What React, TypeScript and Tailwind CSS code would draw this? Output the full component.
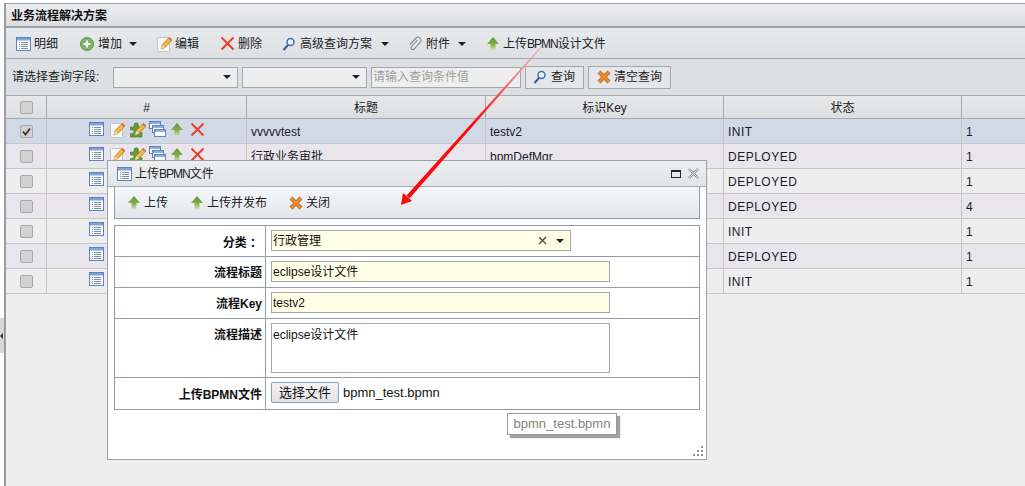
const font = "font-['Liberation_Sans','Noto_Sans_CJK_SC',sans-serif]";

function DetailIcon() {
  return (
    <svg width="15" height="14" viewBox="0 0 15 14" className="shrink-0">
      <rect x="0.5" y="0.5" width="14" height="13" fill="#fff" stroke="#5b84bd" />
      <rect x="1" y="1" width="13" height="2.5" fill="#7fa3d6" />
      <path d="M3 5.500h1M5 5.500h7M3 7.500h1M5 7.500h7M3 9.500h1M5 9.500h7M3 11.500h1M5 11.500h7" stroke="#7f8fa8" />
    </svg>
  );
}

function Pencil({ x = 0 }: { x?: number }) {
  return (
    <g transform={`translate(${x} 0)`}>
      <path d="M4 13l1-4 7-7.500 3 2.500-7 7.500z" fill="#f0b840" stroke="#b8741e" strokeWidth="0.7" />
      <path d="M4 13l1-4 3 2.500z" fill="#f5dcb0" />
      <path d="M11 2.500l3 2.500 1-1.500-2.500-2.500z" fill="#d9704a" />
    </g>
  );
}

function EditIcon() {
  return (
    <svg width="16" height="16" viewBox="0 0 16 16" className="shrink-0">
      <rect x="0.5" y="1.500" width="12" height="14" rx="1" fill="#f6f6f4" stroke="#c4c4c4" />
      <Pencil />
    </svg>
  );
}

function PuzzleIcon() {
  return (
    <svg width="16" height="16" viewBox="0 0 16 16" className="shrink-0">
      <path d="M0.500 5h3.500V3a2.200 2.200 0 0 1 4.400 0v2H12v3.500h-1.500v2H12V15H0.500v-3.500h1.800a1.800 1.800 0 0 0 0-3.600H0.500z" fill="#5f9e3a" stroke="#3f7a28" strokeWidth="0.6" />
      <Pencil x={1} />
    </svg>
  );
}

function StackIcon() {
  return (
    <svg width="17" height="16" viewBox="0 0 17 16" className="shrink-0">
      <rect x="0.5" y="0.5" width="11" height="7" fill="#fff" stroke="#5b84bd" />
      <rect x="1" y="1" width="10" height="2" fill="#8fb0dc" />
      <rect x="3.500" y="4.500" width="11" height="7" fill="#fff" stroke="#5b84bd" />
      <rect x="4" y="5" width="10" height="2" fill="#8fb0dc" />
      <rect x="5.500" y="8.500" width="11" height="7" fill="#fff" stroke="#5b84bd" />
      <rect x="6" y="9" width="10" height="2" fill="#8fb0dc" />
    </svg>
  );
}

function UpIcon() {
  return (
    <svg width="14" height="16" viewBox="0 0 14 16" className="shrink-0">
      <defs>
        <linearGradient id="upg" x1="0" y1="0" x2="0" y2="1">
          <stop offset="0" stopColor="#5f9430" />
          <stop offset="0.55" stopColor="#86b04c" />
          <stop offset="1" stopColor="#dfeccb" />
        </linearGradient>
      </defs>
      <path d="M7 1l6 7H9.500v7h-5V8H1z" fill="url(#upg)" />
    </svg>
  );
}

function RedX() {
  return (
    <svg width="15" height="15" viewBox="0 0 15 15" className="shrink-0">
      <path d="M1.500 1.500l12 12M13.500 1.500l-12 12" stroke="#e8432a" strokeWidth="2" />
    </svg>
  );
}

function OrangeX() {
  return (
    <svg width="14" height="14" viewBox="0 0 14 14" className="shrink-0">
      <path d="M2 2l10 10M12 2L2 12" stroke="#9a6a3a" strokeWidth="4" />
      <path d="M2 2l10 10M12 2L2 12" stroke="#ef8a2a" strokeWidth="2.600" />
    </svg>
  );
}

function PlusIcon() {
  return (
    <svg width="14" height="14" viewBox="0 0 14 14" className="shrink-0">
      <circle cx="7" cy="7" r="6.500" fill="#79b765" stroke="#5b9a4c" />
      <path d="M7 3.500v7M3.500 7h7" stroke="#fff" strokeWidth="2.200" />
    </svg>
  );
}

function SearchIcon() {
  return (
    <svg width="14" height="14" viewBox="0 0 14 14" className="shrink-0">
      <circle cx="8.500" cy="5" r="3.500" fill="#eef4fb" stroke="#3f74b5" strokeWidth="1.500" />
      <path d="M6 8l-4.500 5" stroke="#2f5f9f" strokeWidth="2" />
    </svg>
  );
}

function ClipIcon() {
  return (
    <svg width="14" height="15" viewBox="0 0 14 15" className="shrink-0">
      <path d="M9 3.500L3 10a1.800 1.800 0 0 0 2.600 2.500l6.400-7a3 3 0 0 0-4.400-4L1.500 8" transform="translate(0.500 0.500)" fill="none" stroke="#8a8a8a" strokeWidth="1.100" />
    </svg>
  );
}

function Caret({ className = "" }: { className?: string }) {
  return <span className={`w-0 h-0 border-x-[4px] border-x-transparent border-t-[4px] border-t-[#222] ${className}`} />;
}

function ToolBtn({ icon, label, caretClass, className = "" }: { icon: React.ReactNode; label: React.ReactNode; caretClass?: string; className?: string }) {
  return (
    <div className={`flex items-center ${className}`}>
      {icon}
      <span className="text-[12px] text-[#222] whitespace-nowrap">{label}</span>
      {caretClass && <Caret className={caretClass} />}
    </div>
  );
}

// 窄一点的 BPMN，原图的西文比 Liberation 窄
function Bpmn() {
  return <span className="tracking-[-1px]">BPMN</span>;
}

const rows = [
  { title: "vvvvvtest", key: "testv2", status: "INIT", ver: "1", bg: "bg-[#d2d9e6]" },
  { title: "行政业务审批", key: "bpmDefMgr", status: "DEPLOYED", ver: "1", bg: "bg-[#e8e6ec]" },
  { title: "", key: "", status: "DEPLOYED", ver: "1", bg: "bg-[#eeeeee]" },
  { title: "", key: "", status: "DEPLOYED", ver: "4", bg: "bg-[#e8e6ec]" },
  { title: "", key: "", status: "INIT", ver: "1", bg: "bg-[#eeeeee]" },
  { title: "", key: "", status: "DEPLOYED", ver: "1", bg: "bg-[#e8e6ec]" },
  { title: "", key: "", status: "INIT", ver: "1", bg: "bg-[#eeeeee]" },
];

const gridCols = "grid grid-cols-[41px_200px_239px_238px_238px_1fr]";

function Checkbox({ checked }: { checked?: boolean }) {
  return (
    <span className="w-[13px] h-[13px] rounded-[2px] bg-[#d2d2d2] border border-[#a8a8a8] flex items-center justify-center">
      {checked && (
        <svg width="9" height="9" viewBox="0 0 9 9">
          <path d="M1 4.500l2.500 3L8 1.500" fill="none" stroke="#333" strokeWidth="1.800" />
        </svg>
      )}
    </span>
  );
}

function FormRow({ label, className, labelClass, children }: { label: string; className: string; labelClass: string; children: React.ReactNode }) {
  return (
    <div className={`flex border-b border-[#939ca8] last:border-b-0 ${className}`}>
      <div className={`w-[151px] shrink-0 border-r border-[#939ca8] text-right pr-[3px] text-[12px] font-bold text-[#111] whitespace-pre ${labelClass}`}>{label}</div>
      <div className="flex-1 pl-[4px] pt-[4px]">{children}</div>
    </div>
  );
}

export default function App() {
  return (
    <div className={`relative w-[1025px] h-[486px] overflow-hidden bg-white flex ${font}`}>
      <div className="relative w-[4px] shrink-0 bg-white">
        <div className="absolute left-0 top-[318px] w-[4px] h-[35px] bg-[#d6d6d6] flex items-center">
          <span className="w-0 h-0 border-y-[3px] border-y-transparent border-r-[3px] border-r-[#333]" />
        </div>
      </div>
      <div className="flex-1 min-w-0 border-l-2 border-[#9c9c9c] bg-[#eeeeee] mt-[3px] border-t border-t-[#9c9c9c]">
        <div className="h-[24px] flex items-center pl-[5px] pt-[2px] bg-gradient-to-b from-[#eceef0] to-[#dcdee2] border-b-2 border-[#9ea1a5] text-[12px] font-bold text-[#111]">
          业务流程解决方案
        </div>
        <div className="h-[31px] flex items-center pl-[10px] pt-[1px] bg-gradient-to-b from-[#e8eaed] to-[#dcdfe3] border-b border-[#a6abb1]">
          <ToolBtn icon={<DetailIcon />} label="明细" className="gap-[3px]" />
          <ToolBtn icon={<PlusIcon />} label="增加" caretClass="ml-[3px]" className="gap-[4px] ml-[22px]" />
          <ToolBtn icon={<EditIcon />} label="编辑" className="gap-[2px] ml-[20px]" />
          <ToolBtn icon={<RedX />} label="删除" className="gap-[3px] ml-[21px]" />
          <ToolBtn icon={<SearchIcon />} label="高级查询方案" caretClass="ml-[5px]" className="gap-[4px] ml-[20px]" />
          <ToolBtn icon={<ClipIcon />} label="附件" caretClass="ml-[4px]" className="gap-[4px] ml-[19px]" />
          <ToolBtn icon={<UpIcon />} label={<>上传<Bpmn />设计文件</>} className="gap-[3px] ml-[20px]" />
        </div>
        <div className="h-[37px] flex items-center pl-[6px] bg-[#dcdfe3] border-b border-[#a6abb1]">
          <span className="w-[101px] text-[12px] text-[#222] whitespace-nowrap">请选择查询字段:</span>
          <div className="w-[125px] h-[21px] bg-[#eeeeee] border border-[#a2a8ae] flex items-center justify-end pr-[6px]">
            <Caret />
          </div>
          <div className="w-[125px] h-[21px] ml-[4px] bg-[#eeeeee] border border-[#a2a8ae] flex items-center justify-end pr-[6px]">
            <Caret />
          </div>
          <div className="w-[150px] h-[21px] ml-[4px] bg-[#eeeeee] border border-[#a2a8ae] flex items-center pl-[1px] text-[12px] text-[#a0a0a0]">
            请输入查询条件值
          </div>
          <div className="w-[59px] h-[23px] ml-[4px] border border-[#a2a8ae] bg-[#e4e6e9] flex items-center pl-[7px] gap-[4px] text-[12px] text-[#222]">
            <SearchIcon />查询
          </div>
          <div className="w-[83px] h-[23px] ml-[4px] border border-[#a2a8ae] bg-[#e4e6e9] flex items-center pl-[8px] gap-[3px] text-[12px] text-[#222]">
            <OrangeX />清空查询
          </div>
        </div>
        <div className={`${gridCols} h-[23px] bg-gradient-to-b from-[#e6e8ea] to-[#dcdee1] border-b border-[#a6abb1] text-[12px] text-[#222]`}>
          <div className="border-r border-[#a6abb1] flex items-center justify-center"><Checkbox /></div>
          <div className="border-r border-[#a6abb1] flex items-center justify-center pt-[2px]">#</div>
          <div className="border-r border-[#a6abb1] flex items-center justify-center pt-[2px]">标题</div>
          <div className="border-r border-[#a6abb1] flex items-center justify-center pt-[2px]">标识Key</div>
          <div className="border-r border-[#a6abb1] flex items-center justify-center pt-[2px]">状态</div>
          <div />
        </div>
        {rows.map((r, i) => (
          <div key={i} className={`${gridCols} h-[25px] ${r.bg} border-b border-[#c6c6c6] text-[12px] text-[#1a1a2a]`}>
            <div className="border-r border-[#c6c6c6] flex items-center justify-center"><Checkbox checked={i === 0} /></div>
            <div className="border-r border-[#c6c6c6] flex items-start pt-[3px] pl-[42px]">
              <DetailIcon />
              {i < 2 && (
                <>
                  <span className="ml-[6px]"><EditIcon /></span>
                  <span className="ml-[4px]"><PuzzleIcon /></span>
                  <span className="ml-[3px] -mt-[1px]"><StackIcon /></span>
                  <span className="ml-[4px]"><UpIcon /></span>
                  <span className="ml-[6px]"><RedX /></span>
                </>
              )}
            </div>
            <div className="border-r border-[#c6c6c6] flex items-center pl-[4px] pt-[1px]">{r.title}</div>
            <div className="border-r border-[#c6c6c6] flex items-center pl-[4px] pt-[1px]">{r.key}</div>
            <div className="border-r border-[#c6c6c6] flex items-center pl-[4px] pt-[1px] tracking-[0.5px]">{r.status}</div>
            <div className="flex items-center pl-[4px] pt-[1px]">{r.ver}</div>
          </div>
        ))}
      </div>

      {/* 上传对话框 */}
      <div className="absolute left-[107px] top-[160px] w-[600px] h-[300px] bg-white border border-[#9c9fa3] flex flex-col">
        <div className="h-[26px] shrink-0 flex items-center pl-[9px] pr-[7px] gap-[3px] bg-gradient-to-b from-[#eceef0] to-[#e2e4e7] border-b border-[#a6a9ad] text-[12px] text-[#222]">
          <DetailIcon />
          <span>上传<Bpmn />文件</span>
          <span className="ml-auto w-[10px] h-[8px] border border-[#223] border-t-2" />
          <svg width="11" height="11" viewBox="0 0 11 11" className="ml-[4px]">
            <path d="M1 1l9 9M10 1l-9 9" stroke="#8a8d90" strokeWidth="2.400" />
            <path d="M1 1l9 9M10 1l-9 9" stroke="#fff" strokeWidth="0.800" />
          </svg>
        </div>
        <div className="ml-[6px] mr-[6px] h-[32px] shrink-0 flex items-center pl-[12px] pt-[1px] bg-gradient-to-b from-[#f5f7fa] to-[#e3e6eb] border border-t-0 border-[#939ca8]">
          <ToolBtn icon={<UpIcon />} label="上传" className="gap-[3px]" />
          <ToolBtn icon={<UpIcon />} label="上传并发布" className="gap-[3px] ml-[22px]" />
          <ToolBtn icon={<OrangeX />} label="关闭" className="gap-[3px] ml-[22px]" />
        </div>
        <div className="ml-[6px] mr-[6px] mt-[6px] h-[185px] border border-[#939ca8]">
          <FormRow label="分类 ：" className="h-[31px]" labelClass="pt-[8px]">
            <div className="ml-[1px] w-[300px] h-[21px] bg-[#ffffe6] border border-[#a2a8ae] flex items-center pl-[1px] pr-[5px] text-[12px] text-[#111]">
              行政管理
              <svg width="9" height="9" viewBox="0 0 9 9" className="ml-auto">
                <path d="M1 1l7 7M8 1l-7 7" stroke="#444" strokeWidth="1.200" />
              </svg>
              <Caret className="ml-[9px] mr-[1px]" />
            </div>
          </FormRow>
          <FormRow label="流程标题" className="h-[31px]" labelClass="pt-[7px]">
            <div className="ml-[1px] w-[339px] h-[21px] bg-[#ffffe6] border border-[#a2a8ae] flex items-center pl-[1px] text-[12px] text-[#111]">eclipse设计文件</div>
          </FormRow>
          <FormRow label="流程Key" className="h-[31px]" labelClass="pt-[7px]">
            <div className="ml-[1px] w-[339px] h-[21px] bg-[#ffffe6] border border-[#a2a8ae] flex items-center pl-[1px] text-[12px] text-[#111]">testv2</div>
          </FormRow>
          <FormRow label="流程描述" className="h-[59px]" labelClass="pt-[7px]">
            <div className="ml-[1px] w-[339px] h-[50px] bg-white border border-[#a2a8ae] pl-[1px] pt-[2px] text-[12px] text-[#111]">eclipse设计文件</div>
          </FormRow>
          <FormRow label="上传BPMN文件" className="h-[31px]" labelClass="pt-[8px]">
            <div className="ml-[1px] flex items-center gap-[4px] text-[13px] text-[#111]">
              <div className="w-[68px] h-[21px] rounded-[2px] bg-gradient-to-b from-[#f4f4f4] to-[#e2e2e2] border border-[#7da2ce] flex items-center justify-center">选择文件</div>
              <span>bpmn_test.bpmn</span>
            </div>
          </FormRow>
        </div>
        <svg width="11" height="11" viewBox="0 0 11 11" className="absolute right-[2px] bottom-[2px]" fill="#8a8d90">
          <rect x="8" y="0" width="2" height="2" />
          <rect x="4" y="4" width="2" height="2" />
          <rect x="8" y="4" width="2" height="2" />
          <rect x="0" y="8" width="2" height="2" />
          <rect x="4" y="8" width="2" height="2" />
          <rect x="8" y="8" width="2" height="2" />
        </svg>
      </div>

      <div className="absolute left-[507px] top-[413px] w-[110px] h-[22px] bg-white border border-[#9a9a9a] shadow-[3px_3px_1px_#a0a0a0] flex items-center justify-center text-[13px] text-[#857f7c]">
        bpmn_test.bpmn
      </div>

      <svg width="1025" height="486" viewBox="0 0 1025 486" className="absolute left-0 top-0 pointer-events-none">
        <defs>
          <linearGradient id="arrowg" gradientUnits="userSpaceOnUse" x1="541" y1="47" x2="470" y2="125">
            <stop offset="0" stopColor="#f7b0b0" />
            <stop offset="1" stopColor="#fa0a0a" />
          </linearGradient>
        </defs>
        <polygon points="541,46.500 541.700,47.200 409.500,198.500 406.500,195.500" fill="url(#arrowg)" />
        <polygon points="401,205 403,193 412,201" fill="#fa0a0a" />
      </svg>
    </div>
  );
}
